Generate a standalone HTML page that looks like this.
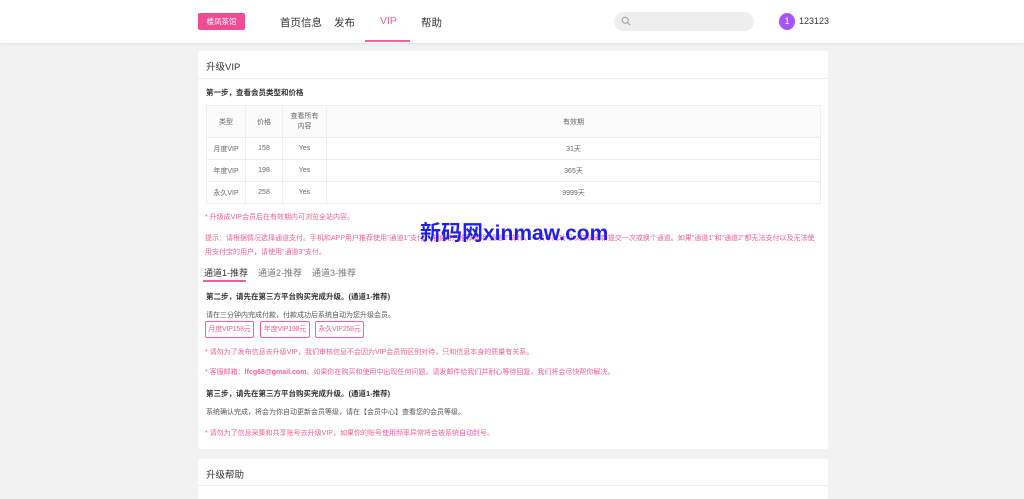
<!DOCTYPE html>
<html><head><meta charset="utf-8"><style>
*{margin:0;padding:0;box-sizing:border-box}
body{width:1024px;height:491px;overflow:hidden;background:#f2f2f2;font-family:"Liberation Sans","Noto Sans CJK SC",sans-serif;color:#333;position:relative}
.abs{position:absolute;white-space:nowrap}
.hdr{position:absolute;left:0;top:0;width:1024px;height:43px;background:#fff;box-shadow:0 1px 3px rgba(0,0,0,.08)}
.card{position:absolute;left:198px;width:630px;background:#fff;border-radius:2px}
.pink{color:#f0609a}
table{position:absolute;left:206px;top:105px;width:615px;border-collapse:collapse;font-size:7px;color:#666;text-align:center}
td{border:1px solid #eee;height:22px;vertical-align:middle}
tr:first-child td{height:32px;background:#fafafa}
.btn{position:absolute;top:321px;height:17px;border:1px solid #f0609a;border-radius:2px;font-size:7px;color:#f0609a;line-height:15px;text-align:center;white-space:nowrap;overflow:hidden;letter-spacing:-0.2px}
</style></head><body>
<div class="hdr"></div>
<div class="abs" style="left:198px;top:13px;width:47px;height:17px;background:#ee4d95;border-radius:2px;color:#fff;font-size:7.5px;line-height:17px;text-align:center">楼凤茶馆</div>
<div class="abs" style="left:280px;top:15px;font-size:10.5px;color:#333">首页信息</div>
<div class="abs" style="left:334px;top:15px;font-size:10.5px;color:#333">发布</div>
<div class="abs" style="left:380px;top:15px;font-size:10.5px;color:#f0609a">VIP</div>
<div class="abs" style="left:365px;top:40px;width:45px;height:2px;background:#f0609a"></div>
<div class="abs" style="left:421px;top:15px;font-size:10.5px;color:#333">帮助</div>
<div class="abs" style="left:614px;top:12px;width:140px;height:19px;background:#eee;border-radius:10px"></div>
<svg class="abs" style="left:621px;top:16px" width="10" height="10" viewBox="0 0 10 10"><circle cx="4.2" cy="4.2" r="3" fill="none" stroke="#999" stroke-width="1"/><path d="M6.5 6.5L9 9" stroke="#999" stroke-width="1"/></svg>
<div class="abs" style="left:779px;top:13px;width:16px;height:17px;border-radius:50%;background:#a855f7;color:#fff;font-size:9px;line-height:17px;text-align:center">1</div>
<div class="abs" style="left:799px;top:16px;font-size:9px;color:#333">123123</div>

<div class="card" style="top:51px;height:398px"></div>
<div class="abs" style="left:206px;top:59px;font-size:9.5px;color:#333">升级VIP</div>
<div class="abs" style="left:198px;top:78px;width:630px;height:1px;background:#eee"></div>
<div class="abs" style="left:206px;top:87px;font-size:7.5px;font-weight:bold;color:#333">第一步，查看会员类型和价格</div>
<table>
<tr><td style="width:39px">类型</td><td style="width:37px">价格</td><td style="width:44px;line-height:10px">查看所有<br>内容</td><td>有效期</td></tr>
<tr><td>月度VIP</td><td>158</td><td>Yes</td><td>31天</td></tr>
<tr><td>年度VIP</td><td>198</td><td>Yes</td><td>365天</td></tr>
<tr><td>永久VIP</td><td>258</td><td>Yes</td><td>9999天</td></tr>
</table>
<div class="abs pink" style="left:205px;top:212px;font-size:7px">* 升级成VIP会员后在有效期内可浏览全站内容。</div>
<div class="abs pink" style="left:205px;top:232px;font-size:7px;line-height:14px;white-space:normal;width:615px">提示：请根据情况选择通道支付。手机和APP用户推荐使用"通道1"支付，电脑用户推荐使用"通道2"支付，一次不成功可以尝试刷新提交一次或换个通道。如果"通道1"和"通道2"都无法支付以及无法使用支付宝的用户，请使用"通道3"支付。</div>
<div class="abs" style="left:420px;top:217px;font-size:21px;font-weight:bold;color:#1e1ef0">新码网xinmaw.com</div>
<div class="abs" style="left:204px;top:266px;font-size:9px;color:#333">通道1-推荐</div>
<div class="abs" style="left:258px;top:266px;font-size:9px;color:#777">通道2-推荐</div>
<div class="abs" style="left:312px;top:266px;font-size:9px;color:#777">通道3-推荐</div>
<div class="abs" style="left:203px;top:280px;width:43px;height:2px;background:#f0609a"></div>
<div class="abs" style="left:206px;top:291px;font-size:7.5px;font-weight:bold;color:#333">第二步，请先在第三方平台购买完成升级。(通道1-推荐)</div>
<div class="abs" style="left:206px;top:310px;font-size:7px;color:#555">请在三分钟内完成付款，付款成功后系统自动为您升级会员。</div>
<div class="btn" style="left:205px;width:49px">月度VIP158元</div>
<div class="btn" style="left:260px;width:50px">年度VIP198元</div>
<div class="btn" style="left:315px;width:49px">永久VIP258元</div>
<div class="abs pink" style="left:205px;top:347px;font-size:7px">* 请勿为了发布信息去升级VIP，我们审核信息不会因为VIP会员而区别对待，只和信息本身的质量有关系。</div>
<div class="abs pink" style="left:205px;top:367px;font-size:7px">* 客服邮箱：<b>lfcg68@gmail.com</b>。如果你在购买和使用中出现任何问题，请发邮件给我们并耐心等待回复，我们将会尽快帮你解决。</div>
<div class="abs" style="left:206px;top:388px;font-size:7.5px;font-weight:bold;color:#333">第三步，请先在第三方平台购买完成升级。(通道1-推荐)</div>
<div class="abs" style="left:206px;top:407px;font-size:7px;color:#555">系统确认完成，将会为你自动更新会员等级，请在【会员中心】查看您的会员等级。</div>
<div class="abs pink" style="left:205px;top:428px;font-size:7px">* 请勿为了信息采集和共享账号去升级VIP，如果你的账号使用频率异常将会被系统自动封号。</div>

<div class="card" style="top:459px;height:40px"></div>
<div class="abs" style="left:206px;top:467px;font-size:9.5px;color:#333">升级帮助</div>
<div class="abs" style="left:198px;top:485px;width:630px;height:1px;background:#eee"></div>
</body></html>
